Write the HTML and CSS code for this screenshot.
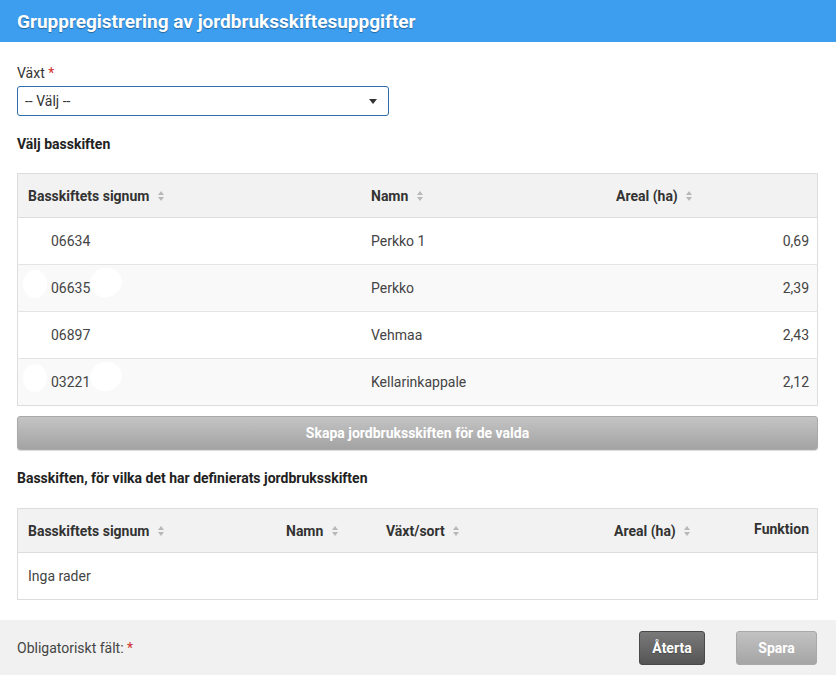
FILE: index.html
```html
<!DOCTYPE html>
<html lang="sv">
<head>
<meta charset="utf-8">
<title>Gruppregistrering av jordbruksskiftesuppgifter</title>
<link rel="stylesheet" href="styles.css">
</head>
<body>
<div class="dialog">
  <header class="topbar">
    <h1 class="title">Gruppregistrering av jordbruksskiftesuppgifter</h1>
  </header>
  <main class="content">
    <div class="field">
      <label class="field-label">Växt <span class="req">*</span></label>
      <div class="select">
        <span class="select-value">-- Välj --</span>
        <span class="caret"></span>
      </div>
    </div>

    <h2 class="section-title">Välj basskiften</h2>
    <table class="grid grid-a">
      <thead>
        <tr>
          <th class="c-sig">Basskiftets signum <span class="sort"></span></th>
          <th class="c-name">Namn <span class="sort"></span></th>
          <th class="c-area">Areal (ha) <span class="sort"></span></th>
        </tr>
      </thead>
      <tbody>
        <tr><td class="c-sig ind">06634</td><td>Perkko 1</td><td class="num">0,69</td></tr>
        <tr class="alt"><td class="c-sig ind"><span class="blob b1"></span><span class="blob b2"></span>06635</td><td>Perkko</td><td class="num">2,39</td></tr>
        <tr><td class="c-sig ind">06897</td><td>Vehmaa</td><td class="num">2,43</td></tr>
        <tr class="alt"><td class="c-sig ind"><span class="blob b1"></span><span class="blob b2"></span>03221</td><td>Kellarinkappale</td><td class="num">2,12</td></tr>
      </tbody>
    </table>

    <button class="btn-wide" type="button">Skapa jordbruksskiften för de valda</button>

    <h2 class="section-title second">Basskiften, för vilka det har definierats jordbruksskiften</h2>
    <table class="grid grid-b">
      <thead>
        <tr>
          <th class="b-sig">Basskiftets signum <span class="sort"></span></th>
          <th class="b-name">Namn <span class="sort"></span></th>
          <th class="b-crop">Växt/sort <span class="sort"></span></th>
          <th class="b-area">Areal (ha) <span class="sort"></span></th>
          <th class="b-func"><span class="func-label">Funktion</span></th>
        </tr>
      </thead>
      <tbody>
        <tr><td colspan="5">Inga rader</td></tr>
      </tbody>
    </table>
  </main>
  <footer class="footer">
    <span class="mandatory">Obligatoriskt fält: <span class="req">*</span></span>
    <div class="actions">
      <button class="btn btn-dark" type="button">Återta</button>
      <button class="btn btn-light" type="button">Spara</button>
    </div>
  </footer>
</div>
</body>
</html>
```

FILE: styles.css
```css
html, body {
  margin: 0;
  padding: 0;
  background: #ffffff;
}
body {
  font-family: Roboto, "Liberation Sans", Arial, sans-serif;
  font-size: 14px;
  color: #333333;
  width: 836px;
  height: 675px;
  overflow: hidden;
}
.dialog {
  display: flex;
  flex-direction: column;
  height: 675px;
}
.topbar {
  background: #3d9eef;
  height: 42px;
  flex-shrink: 0;
  display: flex;
  align-items: center;
  padding: 0 17px;
  box-sizing: border-box;
}
.title {
  margin: 0;
  color: #ffffff;
  font-size: 19px;
  font-weight: 700;
  text-shadow: 0 1px 1px rgba(0,0,0,0.35);
}
.content {
  flex: 1;
  padding: 23px 18px 0 17px;
}
.field-label {
  display: block;
  line-height: 16px;
  margin-bottom: 5px;
  color: #333;
}
.req { color: #d0312d; }
.select {
  width: 372px;
  height: 30px;
  box-sizing: border-box;
  border: 1px solid #2d6ea8;
  border-radius: 3px;
  display: flex;
  align-items: center;
  justify-content: space-between;
  padding: 0 11px 0 7px;
}
.select-value { color: #333; }
.caret {
  width: 0;
  height: 0;
  border-left: 4px solid transparent;
  border-right: 4px solid transparent;
  border-top: 5px solid #333;
}
.section-title {
  margin: 20px 0 21px;
  font-size: 14px;
  font-weight: 700;
  line-height: 16px;
  color: #222;
}
.section-title.second { margin: 20px 0 22px; }
.grid {
  width: 100%;
  border-collapse: collapse;
  border: 1px solid #dddddd;
  table-layout: fixed;
}
.grid th {
  background: #f2f2f2;
  height: 43px;
  text-align: left;
  font-weight: 700;
  color: #333;
  padding: 0 10px;
  border-bottom: 1px solid #dddddd;
  white-space: nowrap;
}
.grid td {
  height: 46px;
  padding: 0 10px;
  border-top: 1px solid #e4e4e4;
  color: #444;
  position: relative;
}
.grid tr.alt td { background: #f9f9f9; }
.grid td.ind { padding-left: 33px; }
.grid td.num { text-align: right; padding-right: 8px; }
.c-sig { width: 323px; }
.c-name { width: 225px; }
.c-area { width: auto; }
.sort {
  display: inline-block;
  vertical-align: middle;
  width: 7px;
  height: 10px;
  margin-left: 5px;
  position: relative;
  top: -1px;
}
.sort::before, .sort::after {
  content: "";
  position: absolute;
  left: 0;
  border-left: 3.5px solid transparent;
  border-right: 3.5px solid transparent;
}
.sort::before { top: 0; border-bottom: 4px solid #b8b8b8; }
.sort::after { bottom: 0; border-top: 4px solid #b8b8b8; }
.blob {
  position: absolute;
  background: #ffffff;
  border-radius: 50%;
}
.blob.b1 { left: 5px; top: 5px; width: 24px; height: 28px; }
.blob.b2 { left: 72px; top: 3px; width: 32px; height: 29px; transform: rotate(-20deg); }
.btn-wide {
  display: block;
  width: 100%;
  height: 34px;
  margin-top: 10px;
  border: 1px solid #a9a9a9;
  border-radius: 3px;
  background: linear-gradient(#c4c4c4, #a3a3a3);
  color: #ffffff;
  font-family: inherit;
  font-size: 14px;
  font-weight: 700;
  box-shadow: 0 1px 1px rgba(0,0,0,0.15);
}
.grid-b th { height: 43px; }
.grid-b td { height: 46px; border-top: none; }
.b-sig { width: 238px; }
.b-name { width: 80px; }
.b-crop { width: 208px; }
.b-area { width: 100px; }
.grid-b th.b-func { text-align: right; padding-right: 8px; }
.func-label { position: relative; top: -2px; }
.footer {
  background: #f1f1f1;
  height: 55px;
  display: flex;
  align-items: center;
  justify-content: space-between;
  padding: 0 19px 0 17px;
  flex-shrink: 0;
}
.mandatory { color: #444; padding-top: 1px; }
.actions { display: flex; gap: 31px; align-items: center; }
.btn {
  height: 34px;
  border-radius: 3px;
  font-family: inherit;
  font-size: 14px;
  font-weight: 700;
  color: #ffffff;
  padding: 0;
  text-shadow: 0 1px 1px rgba(0,0,0,0.25);
}
.btn-dark {
  width: 66px;
  border: 1px solid #4a4a4a;
  background: linear-gradient(#7a7a7a, #555555);
}
.btn-light {
  width: 81px;
  border: 1px solid #a8a8a8;
  background: linear-gradient(#c2c2c2, #a5a5a5);
  text-shadow: none;
}
```
